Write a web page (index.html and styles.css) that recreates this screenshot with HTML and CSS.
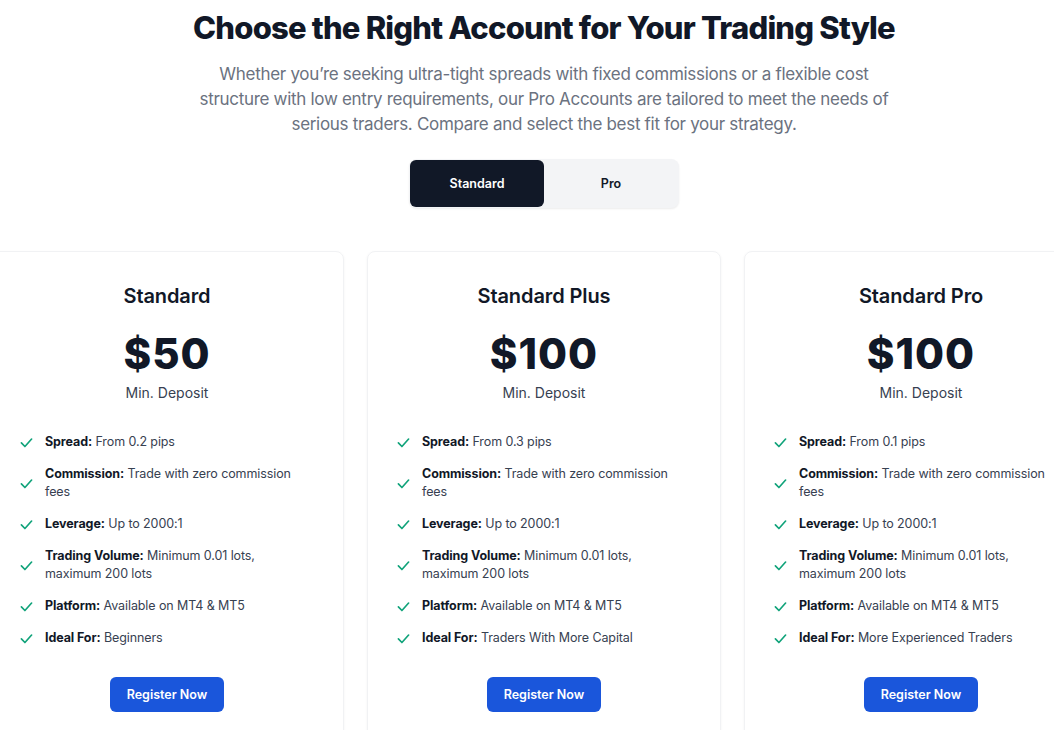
FILE: index.html
```html
<!DOCTYPE html>
<html lang="en">

<head>
    <meta charset="UTF-8">
    <meta name="viewport" content="width=device-width, initial-scale=1.0">
    <title>Account Types</title>
    <link rel="stylesheet" href="styles.css">
</head>

<body>
    <section class="accounts">
        <div class="intro">
            <h1>Choose the Right Account for Your Trading Style</h1>
            <p>Whether you’re seeking ultra-tight spreads with fixed commissions or a flexible cost structure with low entry requirements, our Pro Accounts are tailored to meet the needs of serious traders. Compare and select the best fit for your strategy.</p>
        </div>

        <div class="tabs">
            <a href="#" class="tab active">Standard</a>
            <a href="#" class="tab">Pro</a>
        </div>

        <div class="cards">
            <div class="card">
                <h2>Standard</h2>
                <div class="price">$50</div>
                <div class="min">Min. Deposit</div>
                <ul class="features">
                    <li><svg class="check" viewBox="0 0 14 14"><path d="M1.5 7.5l3.8 3.8 7.2-8"/></svg><p><b>Spread:</b> From 0.2 pips</p></li>
                    <li><svg class="check" viewBox="0 0 14 14"><path d="M1.5 7.5l3.8 3.8 7.2-8"/></svg><p><b>Commission:</b> Trade with zero commission fees</p></li>
                    <li><svg class="check" viewBox="0 0 14 14"><path d="M1.5 7.5l3.8 3.8 7.2-8"/></svg><p><b>Leverage:</b> Up to 2000:1</p></li>
                    <li><svg class="check" viewBox="0 0 14 14"><path d="M1.5 7.5l3.8 3.8 7.2-8"/></svg><p><b>Trading Volume:</b> Minimum 0.01 lots, maximum 200 lots</p></li>
                    <li><svg class="check" viewBox="0 0 14 14"><path d="M1.5 7.5l3.8 3.8 7.2-8"/></svg><p><b>Platform:</b> Available on MT4 &amp; MT5</p></li>
                    <li><svg class="check" viewBox="0 0 14 14"><path d="M1.5 7.5l3.8 3.8 7.2-8"/></svg><p><b>Ideal For:</b> Beginners</p></li>
                </ul>
                <a href="#" class="btn">Register Now</a>
            </div>

            <div class="card">
                <h2>Standard Plus</h2>
                <div class="price">$100</div>
                <div class="min">Min. Deposit</div>
                <ul class="features">
                    <li><svg class="check" viewBox="0 0 14 14"><path d="M1.5 7.5l3.8 3.8 7.2-8"/></svg><p><b>Spread:</b> From 0.3 pips</p></li>
                    <li><svg class="check" viewBox="0 0 14 14"><path d="M1.5 7.5l3.8 3.8 7.2-8"/></svg><p><b>Commission:</b> Trade with zero commission fees</p></li>
                    <li><svg class="check" viewBox="0 0 14 14"><path d="M1.5 7.5l3.8 3.8 7.2-8"/></svg><p><b>Leverage:</b> Up to 2000:1</p></li>
                    <li><svg class="check" viewBox="0 0 14 14"><path d="M1.5 7.5l3.8 3.8 7.2-8"/></svg><p><b>Trading Volume:</b> Minimum 0.01 lots, maximum 200 lots</p></li>
                    <li><svg class="check" viewBox="0 0 14 14"><path d="M1.5 7.5l3.8 3.8 7.2-8"/></svg><p><b>Platform:</b> Available on MT4 &amp; MT5</p></li>
                    <li><svg class="check" viewBox="0 0 14 14"><path d="M1.5 7.5l3.8 3.8 7.2-8"/></svg><p><b>Ideal For:</b> Traders With More Capital</p></li>
                </ul>
                <a href="#" class="btn">Register Now</a>
            </div>

            <div class="card">
                <h2>Standard Pro</h2>
                <div class="price">$100</div>
                <div class="min">Min. Deposit</div>
                <ul class="features">
                    <li><svg class="check" viewBox="0 0 14 14"><path d="M1.5 7.5l3.8 3.8 7.2-8"/></svg><p><b>Spread:</b> From 0.1 pips</p></li>
                    <li><svg class="check" viewBox="0 0 14 14"><path d="M1.5 7.5l3.8 3.8 7.2-8"/></svg><p><b>Commission:</b> Trade with zero commission fees</p></li>
                    <li><svg class="check" viewBox="0 0 14 14"><path d="M1.5 7.5l3.8 3.8 7.2-8"/></svg><p><b>Leverage:</b> Up to 2000:1</p></li>
                    <li><svg class="check" viewBox="0 0 14 14"><path d="M1.5 7.5l3.8 3.8 7.2-8"/></svg><p><b>Trading Volume:</b> Minimum 0.01 lots, maximum 200 lots</p></li>
                    <li><svg class="check" viewBox="0 0 14 14"><path d="M1.5 7.5l3.8 3.8 7.2-8"/></svg><p><b>Platform:</b> Available on MT4 &amp; MT5</p></li>
                    <li><svg class="check" viewBox="0 0 14 14"><path d="M1.5 7.5l3.8 3.8 7.2-8"/></svg><p><b>Ideal For:</b> More Experienced Traders</p></li>
                </ul>
                <a href="#" class="btn">Register Now</a>
            </div>
        </div>
    </section>
</body>

</html>
```

FILE: styles.css
```css
* {
    margin: 0;
    padding: 0;
    box-sizing: border-box;
}

html,
body {
    overflow: hidden;
}

body {
    font-family: Inter, "Noto Sans", sans-serif;
    color: #111827;
    background: #fff;
}

ul {
    list-style: none;
}

a {
    text-decoration: none;
}

.accounts {
    width: 1108px;
    margin-left: -10px;
    display: flex;
    flex-direction: column;
    align-items: center;
}

.intro {
    text-align: center;
    padding-top: 9px;
}

.intro h1 {
    font-size: 31px;
    font-weight: 800;
    line-height: 38px;
    letter-spacing: -0.8px;
    color: #111827;
}

.intro p {
    width: 700px;
    margin: 15px auto 0;
    font-size: 17px;
    line-height: 25px;
    letter-spacing: -0.3px;
    color: #6b7280;
}

.tabs {
    display: flex;
    margin-top: 22px;
    width: 270px;
    height: 49px;
    padding: 1px;
    background: #f3f4f6;
    border-radius: 8px;
    box-shadow: 0 1px 2px rgba(0, 0, 0, 0.08);
}

.tab {
    flex: 1;
    display: flex;
    align-items: center;
    justify-content: center;
    font-size: 12.5px;
    font-weight: 600;
    color: #111827;
    border-radius: 6px;
}

.tab.active {
    background: #111827;
    color: #fff;
}

.cards {
    display: flex;
    gap: 23px;
    margin-top: 43px;
}

.card {
    width: 354px;
    padding: 30px 29px 40px 29px;
    border: 1px solid #f1f2f4;
    border-radius: 8px;
    box-shadow: 0 1px 3px rgba(0, 0, 0, 0.05);
    display: flex;
    flex-direction: column;
    align-items: center;
}

.card h2 {
    font-size: 20px;
    font-weight: 600;
    line-height: 28px;
    letter-spacing: -0.1px;
}

.price {
    margin-top: 20px;
    font-size: 42px;
    font-weight: 800;
    line-height: 48px;
    letter-spacing: 1px;
}

.min {
    margin-top: 5px;
    font-size: 14px;
    line-height: 20px;
    color: #374151;
}

.features {
    align-self: stretch;
    margin-top: 30px;
    display: flex;
    flex-direction: column;
    gap: 14px;
}

.features li {
    display: flex;
    align-items: center;
    gap: 12px;
    font-size: 12.5px;
    line-height: 18px;
    letter-spacing: -0.1px;
    color: #374151;
}

.features b {
    font-weight: 700;
    color: #111827;
}

.check {
    flex: none;
    width: 13px;
    height: 13px;
    fill: none;
    stroke: #10a37a;
    stroke-width: 1.8;
    stroke-linecap: round;
    stroke-linejoin: round;
}

.btn {
    margin-top: 30px;
    display: block;
    padding: 0 17px;
    height: 35px;
    line-height: 35px;
    background: #1a56db;
    color: #fff;
    font-size: 12.5px;
    font-weight: 600;
    border-radius: 6px;
}
```
